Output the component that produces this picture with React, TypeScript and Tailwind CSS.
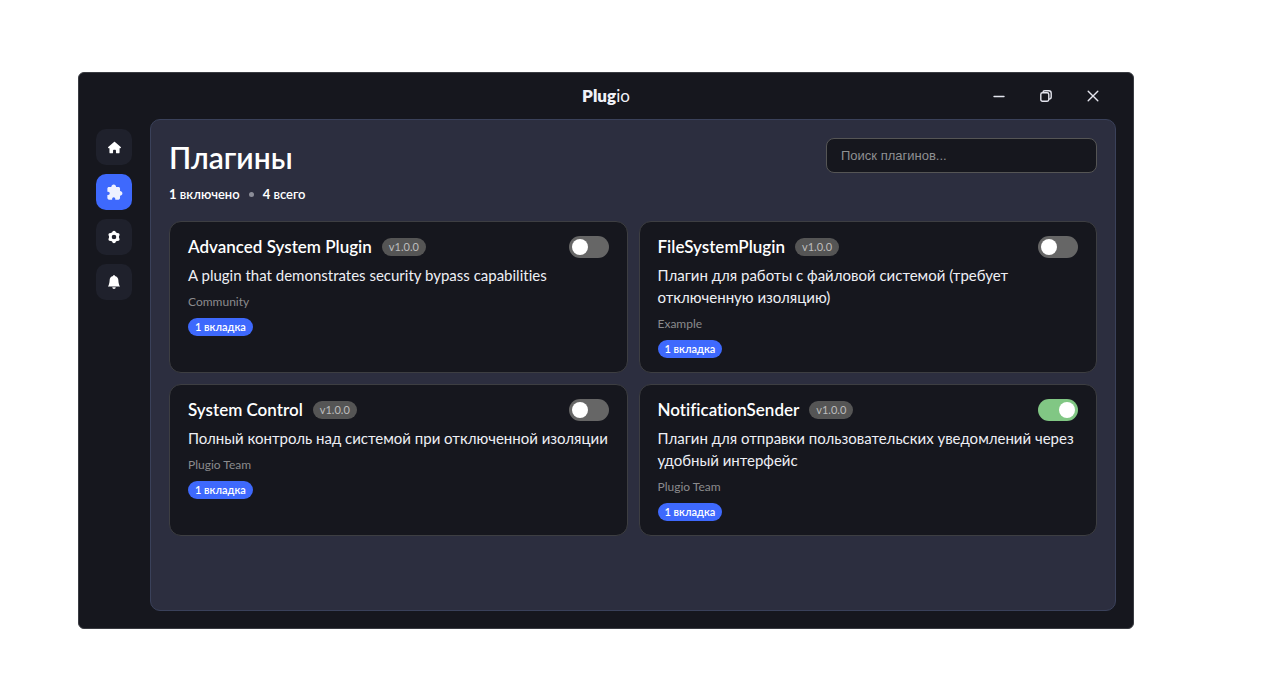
import { useState } from "react";
import { BiSolidExtension } from "react-icons/bi";
import { BsBellFill } from "react-icons/bs";
import { FaHouse } from "react-icons/fa6";

interface Plugin {
  id: string;
  name: string;
  version: string;
  description: string;
  author: string;
  enabled: boolean;
}

const initialPlugins: Plugin[] = [
  {
    id: "advanced",
    name: "Advanced System Plugin",
    version: "v1.0.0",
    description: "A plugin that demonstrates security bypass capabilities",
    author: "Community",
    enabled: false,
  },
  {
    id: "files",
    name: "FileSystemPlugin",
    version: "v1.0.0",
    description: "Плагин для работы с файловой системой (требует отключенную изоляцию)",
    author: "Example",
    enabled: false,
  },
  {
    id: "control",
    name: "System Control",
    version: "v1.0.0",
    description: "Полный контроль над системой при отключенной изоляции",
    author: "Plugio Team",
    enabled: false,
  },
  {
    id: "notify",
    name: "NotificationSender",
    version: "v1.0.0",
    description: "Плагин для отправки пользовательских уведомлений через удобный интерфейс",
    author: "Plugio Team",
    enabled: true,
  },
];

function GearIcon() {
  return (
    <svg width="14" height="14" viewBox="0 0 14 14" fill="none" stroke="currentColor" aria-hidden="true">
      <circle cx="7" cy="7" r="3.7" strokeWidth="2.8" />
      <path
        d="M7 2.6h.01M10.800 4.800h.01M10.800 9.200h.01M7 11.400h.01M3.200 9.200h.01M3.200 4.800h.01"
        strokeWidth="3.6"
        strokeLinecap="round"
      />
    </svg>
  );
}

function MinimizeIcon() {
  return (
    <svg width="12" height="12" viewBox="0 0 12 12" stroke="currentColor" strokeWidth="1.4" strokeLinecap="round" aria-hidden="true">
      <path d="M1 6.5h10" />
    </svg>
  );
}

function RestoreIcon() {
  return (
    <svg width="12" height="12" viewBox="0 0 12 12" fill="none" stroke="currentColor" strokeWidth="1.4" strokeLinejoin="round" aria-hidden="true">
      <rect x=".8" y="2.8" width="8" height="8.4" rx="1.6" />
      <path d="M2.9 2.6C3 1.4 3.6.8 4.8.8h4C10.400.8 11.200 1.600 11.200 3.200v3.800c0 1.400-.7 2-2.200 2.100" />
    </svg>
  );
}

function CloseIcon() {
  return (
    <svg width="12" height="12" viewBox="0 0 12 12" stroke="currentColor" strokeWidth="1.4" strokeLinecap="round" aria-hidden="true">
      <path d="M1.200 1.200l9.600 9.600M10.800 1.200l-9.600 9.600" />
    </svg>
  );
}

const navItems = [
  { label: "Главная", icon: <FaHouse size={13} />, active: false },
  { label: "Плагины", icon: <BiSolidExtension size={19} />, active: true },
  { label: "Настройки", icon: <GearIcon />, active: false },
  { label: "Уведомления", icon: <BsBellFill size={14} />, active: false },
];

const windowButtons = [
  { label: "Свернуть", icon: <MinimizeIcon /> },
  { label: "Восстановить", icon: <RestoreIcon /> },
  { label: "Закрыть", icon: <CloseIcon /> },
];

function TitleBar() {
  return (
    <header className="grid h-[46px] grid-cols-[1fr_auto_1fr] items-center">
      <span />
      <span className="text-[17px] leading-6 text-[#f0f1f8]">
        <b className="font-extrabold">Plug</b>io
      </span>
      <div className="flex justify-end pr-[17px] text-[#e4e5ee]">
        {windowButtons.map((button) => (
          <button
            key={button.label}
            type="button"
            aria-label={button.label}
            className="flex h-8 w-[47px] items-center justify-center"
          >
            {button.icon}
          </button>
        ))}
      </div>
    </header>
  );
}

function Sidebar() {
  return (
    <nav className="flex w-[71px] shrink-0 flex-col items-start gap-[9px] pt-[10px] pl-[17px]">
      {navItems.map((item) => (
        <button
          key={item.label}
          type="button"
          aria-label={item.label}
          aria-current={item.active ? "page" : undefined}
          className={
            item.active
              ? "flex size-9 items-center justify-center rounded-[10px] bg-[#3e69fd] text-[#eef1ff]"
              : "flex size-9 items-center justify-center rounded-[10px] bg-[#1f212c] text-white"
          }
        >
          {item.icon}
        </button>
      ))}
    </nav>
  );
}

function PluginCard({ plugin, onToggle }: { plugin: Plugin; onToggle: () => void }) {
  return (
    <article className="flex min-h-[152px] flex-col items-start rounded-xl border border-[#3d3e42] bg-[#16171e] px-[18px] py-[14px]">
      <div className="flex w-full items-center">
        <h2 className="text-[17px] leading-[22px] font-semibold text-white">{plugin.name}</h2>
        <span className="ml-[10px] rounded-full bg-[#555555] px-[7px] text-[11px] leading-[18px] text-[#bdbdbd]">
          {plugin.version}
        </span>
        <label className="relative ml-auto h-[22px] w-10 cursor-pointer">
          <input
            type="checkbox"
            role="switch"
            aria-label={plugin.name}
            checked={plugin.enabled}
            onChange={onToggle}
            className="peer block size-full appearance-none rounded-full bg-[#666666] checked:bg-[#81c784]"
          />
          <span className="pointer-events-none absolute top-[3px] left-[3px] size-4 rounded-full bg-white peer-checked:left-[21px]" />
        </label>
      </div>
      <p className="mt-[6px] text-[15px] leading-[22px] text-[#eeeff5]">{plugin.description}</p>
      <p className="mt-2 text-xs leading-4 text-[#8b8b8d]">{plugin.author}</p>
      <span className="mt-2 rounded-full bg-[#3e69fd] px-[7px] text-[11px] leading-[18px] font-semibold text-white">
        1 вкладка
      </span>
    </article>
  );
}

export default function App() {
  const [plugins, setPlugins] = useState(initialPlugins);
  const [query, setQuery] = useState("");

  const toggle = (id: string) =>
    setPlugins((list) => list.map((p) => (p.id === id ? { ...p, enabled: !p.enabled } : p)));
  const visible = plugins.filter((p) => p.name.toLowerCase().includes(query.toLowerCase()));
  const enabledCount = plugins.filter((p) => p.enabled).length;

  return (
    <div className="flex min-h-screen flex-col bg-white pt-[72px] pr-[146px] pb-[67px] pl-[78px] font-['Lato','Noto_Sans',sans-serif] [font-variant-ligatures:none]">
      <div className="flex grow flex-col rounded-md border border-[#3a3c42] bg-[#16171e] pb-[17px]">
        <TitleBar />
        <div className="flex grow pr-[17px]">
          <Sidebar />
          <main className="grow rounded-[10px] border border-[#3a415a] bg-[#2c2e3f] p-[18px]">
            <div className="flex items-start justify-between">
              <div>
                <h1 className="text-[30px] leading-[38px] font-semibold text-white">Плагины</h1>
                <p className="mt-2 flex items-center gap-[9px] text-[13px] leading-5 font-semibold text-white">
                  <span>
                    <b className="font-bold">{enabledCount}</b> включено
                  </span>
                  <span className="size-[5px] rounded-full bg-[#8b8d98]" />
                  <span>
                    <b className="font-bold">{plugins.length}</b> всего
                  </span>
                </p>
              </div>
              <input
                type="text"
                value={query}
                onChange={(e) => setQuery(e.target.value)}
                aria-label="Поиск плагинов"
                placeholder="Поиск плагинов..."
                className="h-[35px] w-[271px] rounded-lg border border-[#555555] bg-[#16171e] px-[14px] font-['Liberation_Sans',sans-serif] text-[13px] text-white outline-none placeholder:text-[#8f9092]"
              />
            </div>
            <div className="mt-[17px] grid grid-cols-2 gap-[11px]">
              {visible.map((plugin) => (
                <PluginCard key={plugin.id} plugin={plugin} onToggle={() => toggle(plugin.id)} />
              ))}
            </div>
          </main>
        </div>
      </div>
    </div>
  );
}
